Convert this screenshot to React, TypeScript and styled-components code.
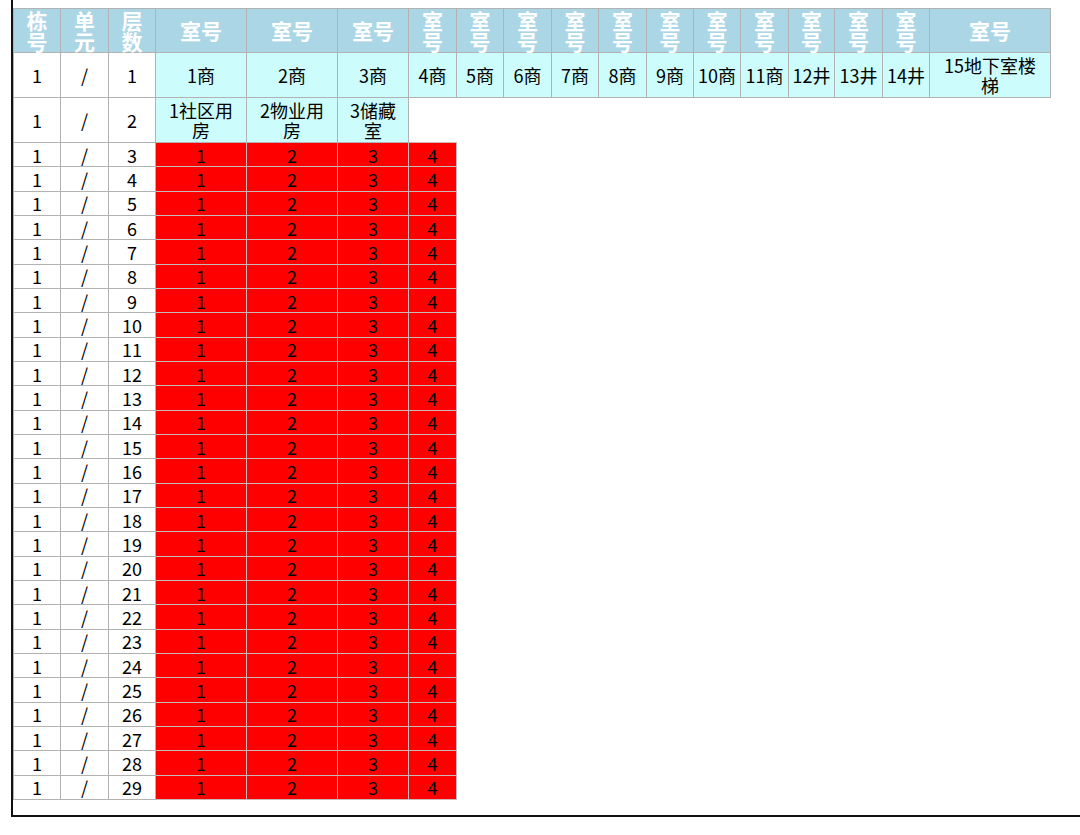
import React from 'react';
import styled, {createGlobalStyle} from "styled-components";

const GlobalStyle = createGlobalStyle`
  html, body {
    margin: 0;
    padding: 0;
    background: #fff;
    overflow: hidden;
  }
  body {
    font-family: "Noto Sans CJK SC", "Noto Sans", sans-serif;
  }
`

const Frame = styled.div`
  margin-left: 11px;
  padding: 8px 0 15px;
  border-left: 2px solid #111;
  border-bottom: 2px solid #111;
`

const Grid = styled.table`
  border-collapse: collapse;
  table-layout: fixed;
  width: 1037px;
  font-size: 18px;
  color: #000;
`

const HeadRow = styled.tr`
  height: 44px;
`

const Row = styled.tr<{ $tall?: boolean }>`
  height: ${p => p.$tall ? '45px' : '24.33px'};
`

const HeadCell = styled.th`
  background: #abd6e6;
  color: #fff;
  font-weight: bold;
  font-size: 21px;
  line-height: 21px;
  border: 1px solid #b2b2b2;
  padding: 0;
  text-align: center;
  vertical-align: middle;
  white-space: nowrap;
`

const Glyph = styled.span`
  display: block;
`

const Cell = styled.td<{ $tone?: 'plain' | 'room' | 'sold' }>`
  background: ${p => p.$tone === 'room' ? '#ccfcfc' : p.$tone === 'sold' ? '#ff0000' : '#fff'};
  border: 1px solid ${p => p.$tone === 'sold' ? '#c9b8b8' : '#b2b2b2'};
  padding: 0;
  text-align: center;
  vertical-align: middle;
  line-height: 20px;
  white-space: nowrap;
`

const widths = [47, 48, 47, 91, 91, 71, 48, 47, 48, 47, 48, 47, 47, 48, 46, 48, 47, 121];

// 表头：窄列里的"室号"竖着排
const headers: { label: string; stacked: boolean }[] = [
    {label: '栋号', stacked: true},
    {label: '单元', stacked: true},
    {label: '层数', stacked: true},
    {label: '室号', stacked: false},
    {label: '室号', stacked: false},
    {label: '室号', stacked: false},
    ...Array.from({length: 11}, () => ({label: '室号', stacked: true})),
    {label: '室号', stacked: false},
];

const firstFloor = [
    '1商', '2商', '3商', '4商', '5商', '6商', '7商', '8商', '9商', '10商', '11商',
    '12井', '13井', '14井', '15地下室楼|梯',
];

const secondFloor = ['1社区用|房', '2物业用|房', '3储藏|室'];

const floors = Array.from({length: 27}, (_, i) => i + 3);

const Label = ({text}: { text: string }) => {
    const parts = text.split('|');
    return (
        <>
            {parts.map((p, i) => (
                <React.Fragment key={i}>
                    {i > 0 && <br/>}
                    {p}
                </React.Fragment>
            ))}
        </>
    );
};

const App = () => {
    return (
        <>
            <GlobalStyle/>
            <Frame>
                <Grid>
                    <colgroup>
                        {widths.map((w, i) => <col key={i} style={{width: w}}/>)}
                    </colgroup>
                    <thead>
                    <HeadRow>
                        {headers.map((h, i) => (
                            <HeadCell key={i}>
                                {h.stacked
                                    ? h.label.split('').map((ch, j) => <Glyph key={j}>{ch}</Glyph>)
                                    : h.label}
                            </HeadCell>
                        ))}
                    </HeadRow>
                    </thead>
                    <tbody>
                    <Row $tall>
                        <Cell>1</Cell>
                        <Cell>/</Cell>
                        <Cell>1</Cell>
                        {firstFloor.map((r, i) => (
                            <Cell key={i} $tone="room"><Label text={r}/></Cell>
                        ))}
                    </Row>
                    <Row $tall>
                        <Cell>1</Cell>
                        <Cell>/</Cell>
                        <Cell>2</Cell>
                        {secondFloor.map((r, i) => (
                            <Cell key={i} $tone="room"><Label text={r}/></Cell>
                        ))}
                    </Row>
                    {floors.map(f => (
                        <Row key={f}>
                            <Cell>1</Cell>
                            <Cell>/</Cell>
                            <Cell>{f}</Cell>
                            {[1, 2, 3, 4].map(n => (
                                <Cell key={n} $tone="sold">{n}</Cell>
                            ))}
                        </Row>
                    ))}
                    </tbody>
                </Grid>
            </Frame>
        </>
    );
};

export default App;
